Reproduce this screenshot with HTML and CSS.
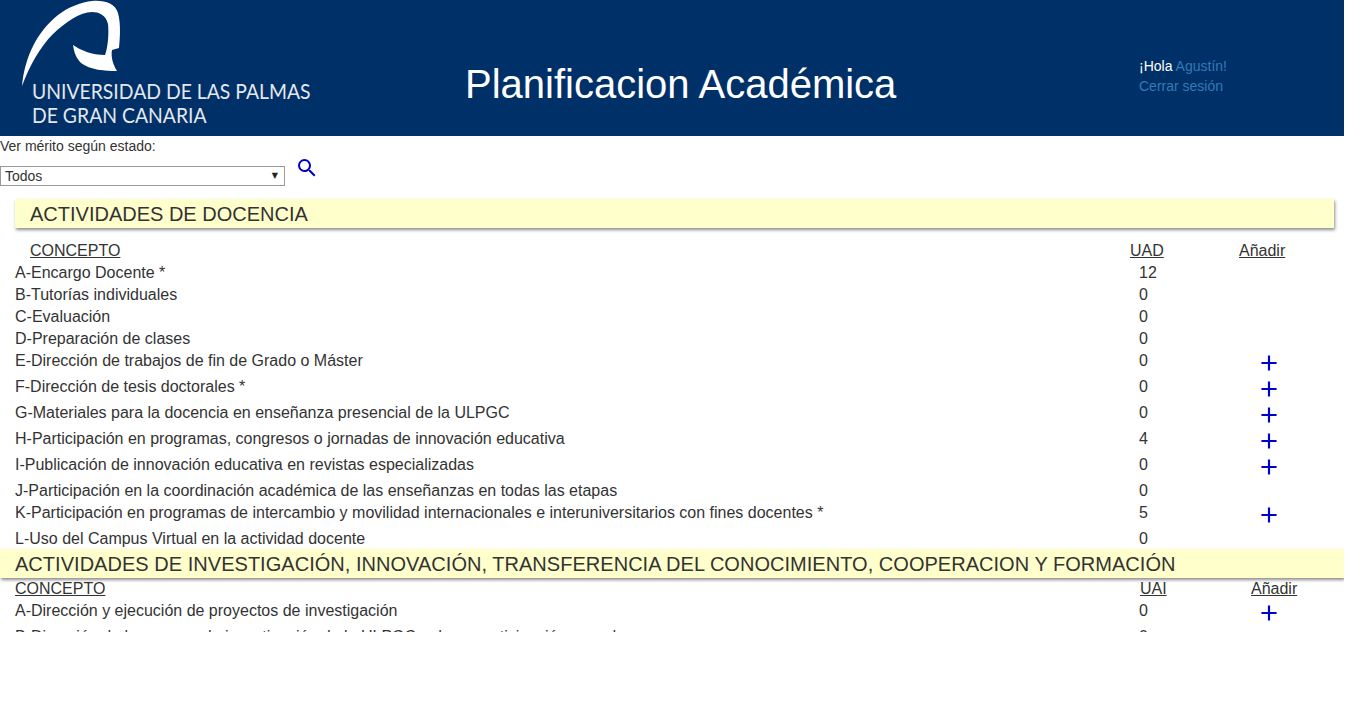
FILE: index.html
```html
<!DOCTYPE html>
<html lang="es">
<head>
	<meta charset="utf-8">
	<title>Planificacion Académica</title>
	<link rel="stylesheet" href="styles.css">
</head>
<body>
	<div class="page">
		<div class="top">
			<div class="logo">
				<svg class="arc" width="104" height="86" viewBox="22 0 104 86">
					<path fill="#fff" d="M22 86C25 56 37 32 58 15C68 7 82 2 92 1C104 0 115 3 118 13C121 24 120 38 119 48L112 50C111 55 112 63 117 71C105 71 90 70 81 63C76 58 74 52 73 45C80 50 92 55 105 55C108 47 109 33 108 24C106 15 99 12 92 12C80 12 66 22 53 34C40 47 30 65 22 86Z"/>
				</svg>
				<div class="logo-name">UNIVERSIDAD DE LAS PALMAS<br>DE GRAN CANARIA</div>
			</div>
			<h1 class="title">Planificacion Académica</h1>
			<div class="user">
				<div>¡Hola <a href="#">Agustín!</a></div>
				<div><a href="#">Cerrar sesión</a></div>
			</div>
		</div>

		<div class="filter">
			<div class="filter-label">Ver mérito según estado:</div>
			<div class="filter-row">
				<div class="select-box">
					<select class="filter-select"><option>Todos</option></select>
				</div>
				<svg class="search" width="24" height="24" viewBox="0 0 24 24"><path fill="#00c" d="M15.5 14h-.79l-.28-.27A6.47 6.47 0 0 0 16 9.5 6.5 6.5 0 1 0 9.5 16c1.61 0 3.09-.59 4.23-1.57l.27.28v.79l5 4.99L20.49 19l-4.99-5zm-6 0C7.01 14 5 11.99 5 9.5S7.01 5 9.5 5 14 7.01 14 9.5 11.99 14 9.5 14z"/></svg>
			</div>
		</div>

		<h2 class="section section-first">ACTIVIDADES DE DOCENCIA</h2>
		<div class="list list-first">
			<div class="row head"><span class="name">CONCEPTO</span><span class="num">UAD</span><span class="add">Añadir</span></div>
			<div class="row"><span class="name">A-Encargo Docente *</span><span class="num">12</span></div>
			<div class="row"><span class="name">B-Tutorías individuales</span><span class="num">0</span></div>
			<div class="row"><span class="name">C-Evaluación</span><span class="num">0</span></div>
			<div class="row"><span class="name">D-Preparación de clases</span><span class="num">0</span></div>
			<div class="row tall"><span class="name">E-Dirección de trabajos de fin de Grado o Máster</span><span class="num">0</span><span class="add"><svg class="plus" width="26" height="26" viewBox="0 0 24 24"><path d="M19 13h-6v6h-2v-6H5v-2h6V5h2v6h6v2z"/></svg></span></div>
			<div class="row tall"><span class="name">F-Dirección de tesis doctorales *</span><span class="num">0</span><span class="add"><svg class="plus" width="26" height="26" viewBox="0 0 24 24"><path d="M19 13h-6v6h-2v-6H5v-2h6V5h2v6h6v2z"/></svg></span></div>
			<div class="row tall"><span class="name">G-Materiales para la docencia en enseñanza presencial de la ULPGC</span><span class="num">0</span><span class="add"><svg class="plus" width="26" height="26" viewBox="0 0 24 24"><path d="M19 13h-6v6h-2v-6H5v-2h6V5h2v6h6v2z"/></svg></span></div>
			<div class="row tall"><span class="name">H-Participación en programas, congresos o jornadas de innovación educativa</span><span class="num">4</span><span class="add"><svg class="plus" width="26" height="26" viewBox="0 0 24 24"><path d="M19 13h-6v6h-2v-6H5v-2h6V5h2v6h6v2z"/></svg></span></div>
			<div class="row tall"><span class="name">I-Publicación de innovación educativa en revistas especializadas</span><span class="num">0</span><span class="add"><svg class="plus" width="26" height="26" viewBox="0 0 24 24"><path d="M19 13h-6v6h-2v-6H5v-2h6V5h2v6h6v2z"/></svg></span></div>
			<div class="row"><span class="name">J-Participación en la coordinación académica de las enseñanzas en todas las etapas</span><span class="num">0</span></div>
			<div class="row tall"><span class="name">K-Participación en programas de intercambio y movilidad internacionales e interuniversitarios con fines docentes *</span><span class="num">5</span><span class="add"><svg class="plus" width="26" height="26" viewBox="0 0 24 24"><path d="M19 13h-6v6h-2v-6H5v-2h6V5h2v6h6v2z"/></svg></span></div>
			<div class="row"><span class="name">L-Uso del Campus Virtual en la actividad docente</span><span class="num">0</span></div>
		</div>

		<h2 class="section section-second">ACTIVIDADES DE INVESTIGACIÓN, INNOVACIÓN, TRANSFERENCIA DEL CONOCIMIENTO, COOPERACION Y FORMACIÓN</h2>
		<div class="list list-second">
			<div class="row head"><span class="name">CONCEPTO</span><span class="num">UAI</span><span class="add">Añadir</span></div>
			<div class="row tall"><span class="name">A-Dirección y ejecución de proyectos de investigación</span><span class="num">0</span><span class="add"><svg class="plus" width="26" height="26" viewBox="0 0 24 24"><path d="M19 13h-6v6h-2v-6H5v-2h6V5h2v6h6v2z"/></svg></span></div>
			<div class="row tall"><span class="name">B-Dirección de los grupos de investigación de la ULPGC y de su participación en redes</span><span class="num">0</span></div>
		</div>
	</div>
</body>
</html>
```

FILE: styles.css
```css
* {padding: 0; margin: 0; box-sizing: border-box;}
html, body {background: #fff;}
body {
	font-family: "Liberation Sans", Arial, sans-serif;
	font-size: 16px;
	color: #333;
}
a {color: #337ab7; text-decoration: none;}

.page {
	width: 1344px;
	height: 632px;
	overflow: hidden;
}

/* cabecera */
.top {
	display: flex;
	height: 136px;
	background: #003068;
	color: #fff;
}
.logo {
	width: 340px;
	padding: 0 0 0 22px;
	flex: none;
}
.arc {display: block;}
.logo-name {
	margin: -7px 0 0 10px;
	font-family: Lato, "Open Sans", sans-serif;
	font-size: 22px;
	line-height: 24px;
	color: #e4e8ee;
	white-space: nowrap;
	transform: scaleX(.88);
	transform-origin: left;
}
.title {
	width: 685px;
	padding: 58px 0 0 125px;
	font-size: 40px;
	line-height: 52px;
	font-weight: normal;
	white-space: nowrap;
}
.user {
	padding: 56px 0 0 114px;
	font-size: 14px;
	line-height: 20px;
}

/* filtro */
.filter {height: 63px;}
.filter-label {
	font-size: 14px;
	line-height: 20px;
}
.filter-row {
	display: flex;
	align-items: flex-start;
}
.select-box {
	position: relative;
	width: 285px;
	height: 20px;
	margin-top: 10px;
}
.select-box::after {
	content: "▼";
	position: absolute;
	right: 7px;
	top: 4px;
	font-family: "DejaVu Sans", sans-serif;
	font-size: 8px;
	line-height: 12px;
	color: #222;
}
.filter-select {
	display: block;
	width: 100%;
	height: 100%;
	padding-left: 4px;
	appearance: none;
	font-family: "Liberation Sans", Arial, sans-serif;
	font-size: 14px;
	color: #333;
	background: #fff;
	border: 1px solid #999;
	border-radius: 0;
}
.search {margin: 0 0 0 10px;}

/* secciones */
.section {
	height: 29px;
	padding: 1px 0 0 15px;
	font-size: 20px;
	line-height: 29px;
	font-weight: normal;
	background: #ffc;
	box-shadow: 1px 2px 3px rgba(0, 0, 0, .45);
	white-space: nowrap;
}
.section-first {
	margin: 0 10px 0 15px;
}
.section-second {
	margin-top: -1px;
	letter-spacing: .03px;
}
.list-first {padding-top: 12px;}

.row {
	display: flex;
	height: 22px;
	line-height: 22px;
	padding-left: 15px;
}
.row.tall {height: 26px;}
.name {width: 1124px; flex: none; white-space: nowrap;}
.num {width: 100px; flex: none;}
.add {
	width: 75px;
	flex: none;
}
.head span {text-decoration: underline;}
.list-first .head .name {padding-left: 15px;}
.list-first .head .num {margin-left: -9px; margin-right: 9px;}
.list-second .head .num {padding-left: 1px;}
.list-second .head .add {padding-left: 12px;}
.plus {
	display: block;
	margin-left: 17px;
	fill: #00c;
}
```
